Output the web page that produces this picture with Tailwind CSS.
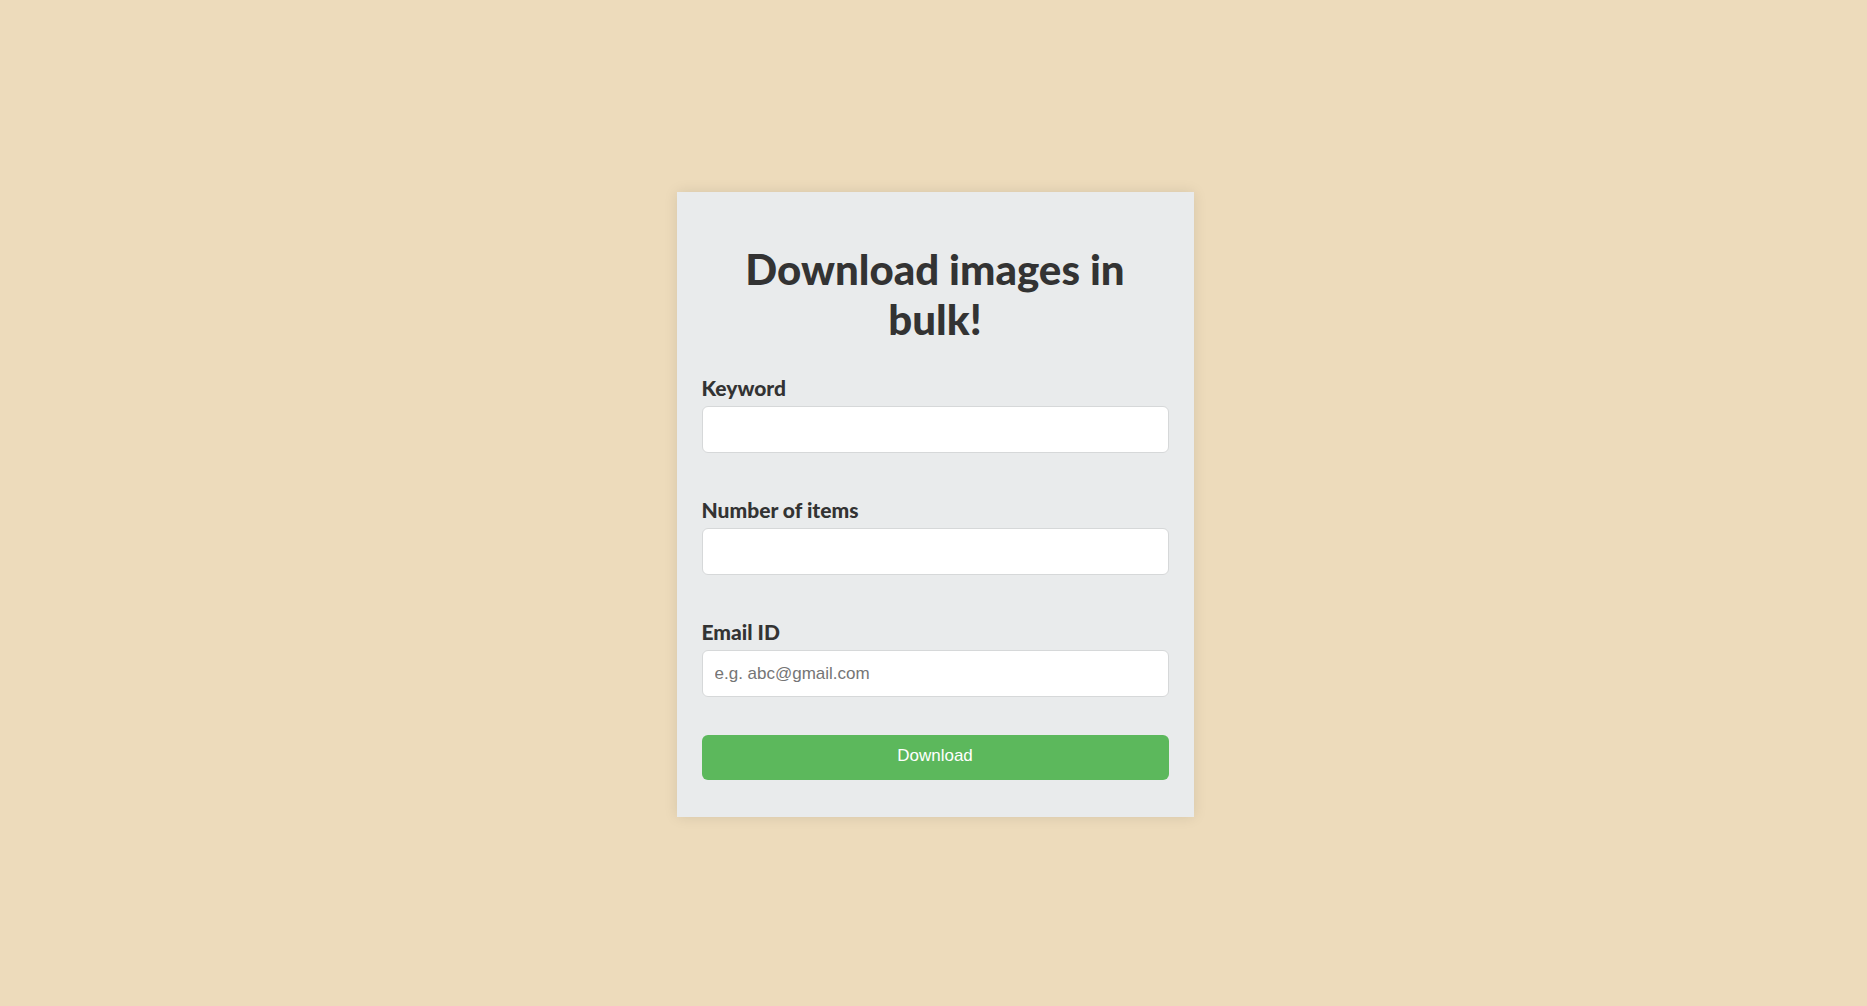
<!DOCTYPE html>
<html lang="en">
<head>
<meta charset="utf-8">
<meta name="viewport" content="width=device-width, initial-scale=1">
<title>Download images in bulk</title>
<script src="https://cdn.jsdelivr.net/npm/@tailwindcss/browser@4"></script>
</head>
<body class="flex min-h-screen items-center justify-center bg-[#eddbbb] pt-[3px] pl-[3px] font-['Lato',sans-serif] text-[#333]">
<main class="w-full max-w-[517px] bg-[#e9ebec] px-[25px] pt-[52px] pb-[37px] shadow-[0_0_13px_rgba(0,0,0,0.1)]">
  <h1 class="mb-[30px] text-center text-[42px] leading-[50px] font-black">Download images in bulk!</h1>
  <form>
    <div class="mb-[43px]">
      <label for="keyword" class="mb-1 block text-[21px] leading-[28px] font-black">Keyword</label>
      <input id="keyword" type="text" class="block h-[47px] w-full rounded-md border border-[#d6d8d9] bg-white px-3 font-['Liberation_Sans',sans-serif] text-[17px]">
    </div>
    <div class="mb-[43px]">
      <label for="count" class="mb-1 block text-[21px] leading-[28px] font-black">Number of items</label>
      <input id="count" type="text" class="block h-[47px] w-full rounded-md border border-[#d6d8d9] bg-white px-3 font-['Liberation_Sans',sans-serif] text-[17px]">
    </div>
    <div class="mb-[38px]">
      <label for="email" class="mb-1 block text-[21px] leading-[28px] font-black">Email ID</label>
      <input id="email" type="email" placeholder="e.g. abc@gmail.com" class="block h-[47px] w-full rounded-md border border-[#d6d8d9] bg-white px-3 font-['Liberation_Sans',sans-serif] text-[17px] placeholder:text-[#757575]">
    </div>
    <button type="submit" class="block h-[45px] w-full rounded-md bg-[#5cb85c] pb-1 font-['Liberation_Sans',sans-serif] text-[17px] text-white">Download</button>
  </form>
</main>
</body>
</html>
